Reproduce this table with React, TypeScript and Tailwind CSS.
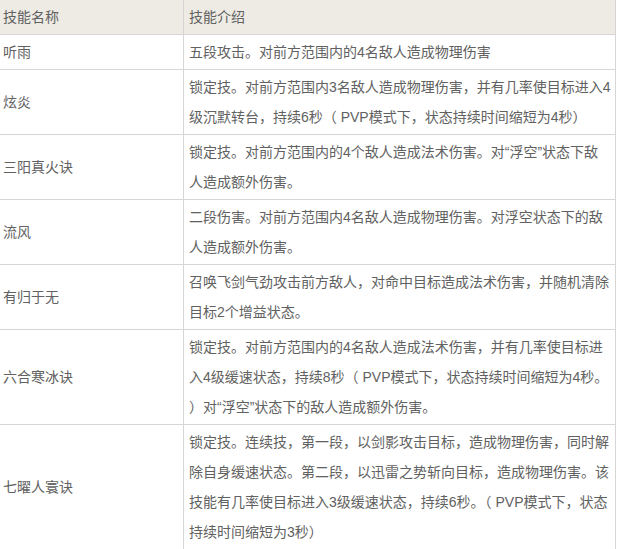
const skills: { name: string; lines: string[] }[] = [
  { name: "听雨", lines: ["五段攻击。对前方范围内的4名敌人造成物理伤害"] },
  {
    name: "炫炎",
    lines: [
      "锁定技。对前方范围内3名敌人造成物理伤害，并有几率使目标进入4",
      "级沉默转台，持续6秒（ PVP模式下，状态持续时间缩短为4秒）",
    ],
  },
  {
    name: "三阳真火诀",
    lines: ["锁定技。对前方范围内的4个敌人造成法术伤害。对“浮空”状态下敌", "人造成额外伤害。"],
  },
  {
    name: "流风",
    lines: ["二段伤害。对前方范围内4名敌人造成物理伤害。对浮空状态下的敌", "人造成额外伤害。"],
  },
  {
    name: "有归于无",
    lines: ["召唤飞剑气劲攻击前方敌人，对命中目标造成法术伤害，并随机清除", "目标2个增益状态。"],
  },
  {
    name: "六合寒冰诀",
    lines: [
      "锁定技。对前方范围内的4名敌人造成法术伤害，并有几率使目标进",
      "入4级缓速状态，持续8秒（ PVP模式下，状态持续时间缩短为4秒。",
      "）对“浮空”状态下的敌人造成额外伤害。",
    ],
  },
  {
    name: "七曜人寰诀",
    lines: [
      "锁定技。连续技，第一段，以剑影攻击目标，造成物理伤害，同时解",
      "除自身缓速状态。第二段，以迅雷之势斩向目标，造成物理伤害。该",
      "技能有几率使目标进入3级缓速状态，持续6秒。（ PVP模式下，状态",
      "持续时间缩短为3秒）",
    ],
  },
];

export default function App() {
  return (
    <div className="h-[549px] w-[617px] overflow-hidden bg-white font-['Liberation_Sans','Noto_Sans_CJK_SC',sans-serif] text-[14px] leading-[30px] text-[#616161]">
      <div className="w-[616px] border-r border-[#d6d6d6]">
        <div className="flex border-b border-[#d6d6d6] bg-[#edebe4]">
          <div className="w-[184px] shrink-0 border-r border-[#d6d6d6] py-[2px] pl-[3px]">技能名称</div>
          <div className="flex-1 py-[2px] pl-[5px]">技能介绍</div>
        </div>
        {skills.map((s) => (
          <div key={s.name} className="flex border-b border-[#d6d6d6]">
            <div className="flex w-[184px] shrink-0 items-center border-r border-[#d6d6d6] py-[2px] pl-[3px]">
              {s.name}
            </div>
            <div className="flex-1 py-[2px] pl-[5px]">
              {s.lines.map((l) => (
                <div key={l} className="whitespace-nowrap">
                  {l}
                </div>
              ))}
            </div>
          </div>
        ))}
      </div>
    </div>
  );
}
